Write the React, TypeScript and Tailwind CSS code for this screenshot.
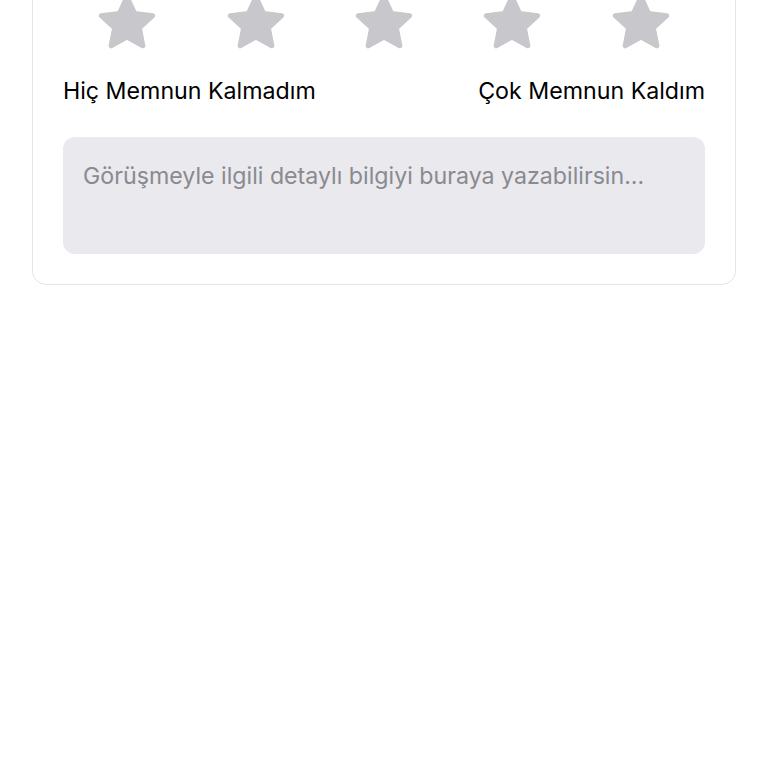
import { useState } from 'react';

function Star({ active }: { active: boolean }) {
  const cx = 32;
  const cy = 32;
  const R = 27;
  const r = 13;
  const pts: string[] = [];
  for (let i = 0; i < 10; i++) {
    const rad = i % 2 === 0 ? R : r;
    const a = (Math.PI / 5) * i - Math.PI / 2;
    pts.push(`${(cx + rad * Math.cos(a)).toFixed(2)},${(cy + rad * Math.sin(a)).toFixed(2)}`);
  }
  const color = active ? '#f5b301' : '#c7c7cc';
  return (
    <svg width="64" height="64" viewBox="0 0 64 64">
      <polygon points={pts.join(' ')} fill={color} stroke={color} strokeWidth="5" strokeLinejoin="round" />
    </svg>
  );
}

export default function App() {
  const [rating, setRating] = useState(0);
  const [note, setNote] = useState('');

  return (
    <div className="min-h-[768px] bg-white px-8" style={{ fontFamily: 'Inter, "Noto Sans", sans-serif' }}>
      <div className="-mt-[41px] rounded-[14px] border border-[#e5e5ea] bg-white px-[30px] pt-[32px] pb-[30px]">
        {/* Stars */}
        <div className="flex">
          {[1, 2, 3, 4, 5].map((n) => (
            <button key={n} onClick={() => setRating(n)} className="flex flex-1 justify-center">
              <Star active={n <= rating} />
            </button>
          ))}
        </div>

        <div className="mt-[21px] flex justify-between text-[23.2px] leading-[28px] text-black">
          <span>Hiç Memnun Kalmadım</span>
          <span>Çok Memnun Kaldım</span>
        </div>

        <textarea
          value={note}
          onChange={(e) => setNote(e.target.value)}
          placeholder="Görüşmeyle ilgili detaylı bilgiyi buraya yazabilirsin..."
          className="mt-8 block h-[117px] w-full resize-none rounded-xl bg-[#e9e9ee] px-5 pt-[25px] text-[23.2px] leading-[28px] text-black outline-none placeholder:text-[#8a8a8f]"
        />
      </div>
    </div>
  );
}
